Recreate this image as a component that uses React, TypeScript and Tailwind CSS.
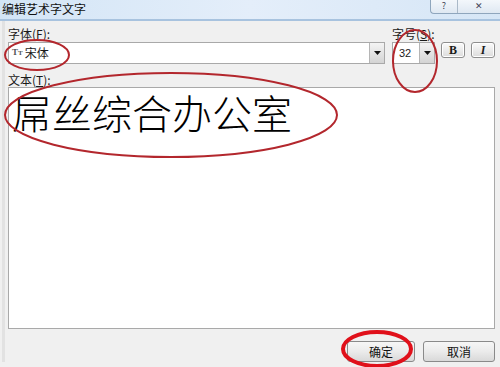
import React from 'react';

const cjk = { fontFamily: '"Noto Sans CJK SC", "Noto Sans", sans-serif' };

const ArrowBox = () => (
  <div className="w-[15px] h-full flex items-center justify-center bg-gradient-to-b from-[#f4f4f4] to-[#d4d4d4] border-l border-[#b5b5b5]">
    <svg width="7" height="4" viewBox="0 0 7 4">
      <path d="M0 0h7L3.5 4z" fill="#111" />
    </svg>
  </div>
);

const StyleButton = ({ children }: { children: React.ReactNode }) => (
  <div className="w-[24px] h-[16px] flex items-center justify-center rounded-[3px] border border-[#8e8e8e] bg-gradient-to-b from-[#fbfbfb] to-[#dcdcdc] shadow-[inset_0_0_0_1px_#fff]">
    {children}
  </div>
);

const DialogButton = ({ label }: { label: string }) => (
  <div className="h-[21px] flex items-center justify-center rounded-[3px] border border-[#8a8a8a] bg-gradient-to-b from-[#f6f6f6] via-[#ebebeb] to-[#d9d9d9] text-[12px] text-[#111]">
    {label}
  </div>
);

export default function App() {
  return (
    <div className="relative w-[500px] h-[367px] overflow-hidden bg-[#f0f0f0] text-[#1a1a1a]" style={cjk}>
      {/* title bar */}
      <div className="h-[21px] flex items-start bg-gradient-to-r from-[#d3e5f6] via-[#e4eefa] to-[#d6e6f6] border-b-[2px] border-[#a8c3df]">
        <div className="pl-[2px] pt-[1px] text-[12px] leading-[16px] text-[#111]">编辑艺术字文字</div>
        <div className="ml-auto flex h-[14px] w-[70px] border-l border-b border-[#8fa6bd] rounded-bl-[4px] bg-gradient-to-b from-[#f3f7fb] to-[#dfe8f2] text-[9px] leading-[12px] text-[#445]">
          <div className="w-[27px] flex justify-center border-r border-[#aab9c8]">?</div>
          <div className="flex-1 flex justify-center">✕</div>
        </div>
      </div>

      <div className="pl-[8px] pr-[5px] pt-[6px] border-l-[3px] border-[#e2e2e2] ml-[2px]">
        {/* font row */}
        <div className="flex items-start ml-[-5px]">
          <div className="flex-1 flex flex-col">
            <div className="text-[12px] leading-[14px] h-[14px]">
              字体(<span className="underline">F</span>):
            </div>
            <div className="mt-[1px] h-[22px] flex border border-[#a9a9a9] bg-white">
              <div className="flex-1 flex items-center pl-[3px] gap-[2px] text-[12px]">
                <span className="text-[9px] font-bold text-[#555]" style={{ fontFamily: '"Liberation Serif", serif' }}>
                  T<span className="text-[7px]">T</span>
                </span>
                <span>宋体</span>
              </div>
              <ArrowBox />
            </div>
          </div>
          <div className="w-[43px] ml-[7px] flex flex-col">
            <div className="text-[12px] leading-[14px] h-[14px] whitespace-nowrap">
              字号(<span className="underline">S</span>):
            </div>
            <div className="mt-[1px] h-[22px] flex border border-[#a9a9a9] bg-white">
              <div className="flex-1 flex items-center pl-[6px] text-[11px]" style={{ fontFamily: '"Liberation Sans", sans-serif' }}>
                32
              </div>
              <ArrowBox />
            </div>
          </div>
          <div className="flex gap-[6px] ml-[6px] mt-[15px]">
            <StyleButton>
              <span className="text-[12px] font-bold leading-none" style={{ fontFamily: '"Liberation Serif", serif' }}>B</span>
            </StyleButton>
            <StyleButton>
              <span className="text-[12px] font-bold italic leading-none" style={{ fontFamily: '"Liberation Serif", serif' }}>I</span>
            </StyleButton>
          </div>
        </div>

        {/* text area */}
        <div className="ml-[-5px] mt-[9px] text-[12px] leading-[14px] h-[14px]">
          文本(<span className="underline">T</span>):
        </div>
        <div className="ml-[-5px] mt-0 h-[242px] border border-[#a9a9a9] bg-white pl-[3px] pt-[3px]">
          <div className="text-[40px] leading-[42px] font-light text-black">屌丝综合办公室</div>
        </div>

        {/* buttons */}
        <div className="flex justify-end gap-[8px] mt-[12px]">
          <div className="w-[68px]"><DialogButton label="确定" /></div>
          <div className="w-[72px]"><DialogButton label="取消" /></div>
        </div>
      </div>

      {/* red annotation marks */}
      <svg className="absolute inset-0 pointer-events-none" width="500" height="367">
        <ellipse cx="37" cy="55" rx="32" ry="15" fill="none" stroke="#b3272d" strokeWidth="2" />
        <ellipse cx="415" cy="61" rx="22" ry="31" fill="none" stroke="#b3272d" strokeWidth="2" />
        <ellipse cx="171" cy="115" rx="166" ry="42" fill="none" stroke="#b3272d" strokeWidth="2" />
        <ellipse cx="377" cy="349" rx="34" ry="17" fill="none" stroke="#e0101a" strokeWidth="4" />
      </svg>
    </div>
  );
}
